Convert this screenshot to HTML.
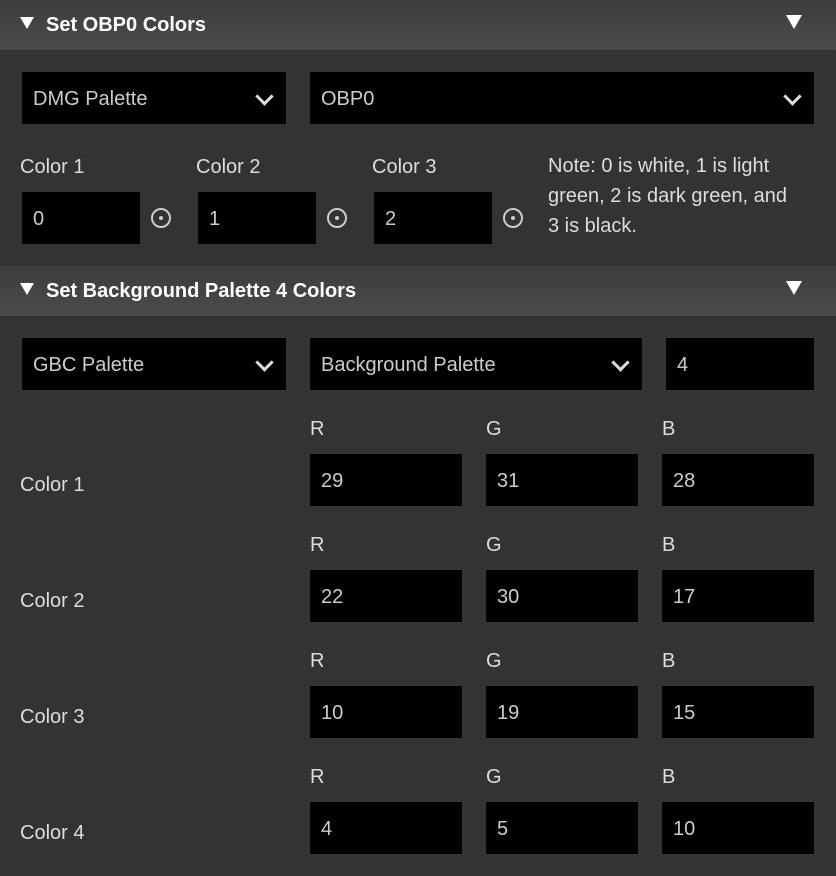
<!DOCTYPE html>
<html><head><meta charset="utf-8"><style>
*{margin:0;padding:0;box-sizing:border-box}
body{width:836px;height:876px;background:#333;font-family:"Liberation Sans",sans-serif;color:#ddd;position:relative;overflow:hidden;font-size:20px}
.hd{position:absolute;left:0;width:836px;height:50px;background:linear-gradient(#3c3c3c,#4b4b4b);color:#fff;font-weight:bold;font-size:20px}
.hd .t{position:absolute;left:20px;top:14px}
.hd .t:before{content:"";display:inline-block;width:0;height:0;border-left:7px solid transparent;border-right:7px solid transparent;border-top:12px solid #fff;margin-right:12px;vertical-align:2px}
.hd .a{position:absolute;right:34px;top:15px;width:0;height:0;border-left:8px solid transparent;border-right:8px solid transparent;border-top:14px solid #fff}
.b{position:absolute;background:#000;height:52px;color:#ccc;padding-left:11px;line-height:55px}
.dd:after{content:"";position:absolute;right:15px;top:18px;width:10px;height:10px;border-right:3px solid #ddd;border-bottom:3px solid #ddd;transform:rotate(45deg)}
.l{position:absolute;color:#ddd}
.ic{position:absolute;width:20px;height:20px;border:2px solid #ccc;border-radius:50%}
.ic:after{content:"";position:absolute;left:6px;top:6px;width:4px;height:4px;background:#ccc;border-radius:50%}
</style></head><body>
<div class="hd" style="top:0"><span class="t">Set OBP0 Colors</span><span class="a"></span></div>
<div class="b dd" style="left:22px;top:72px;width:264px">DMG Palette</div>
<div class="b dd" style="left:310px;top:72px;width:504px">OBP0</div>
<div class="l" style="left:20px;top:156px">Color 1</div>
<div class="l" style="left:196px;top:156px">Color 2</div>
<div class="l" style="left:372px;top:156px">Color 3</div>
<div class="b" style="left:22px;top:192px;width:118px">0</div>
<div class="b" style="left:198px;top:192px;width:118px">1</div>
<div class="b" style="left:374px;top:192px;width:118px">2</div>
<div class="ic" style="left:151px;top:208px"></div>
<div class="ic" style="left:327px;top:208px"></div>
<div class="ic" style="left:503px;top:208px"></div>
<div class="l" style="left:548px;top:151px;line-height:30px;width:280px">Note: 0 is white, 1 is light<br>green, 2 is dark green, and<br>3 is black.</div>
<div class="hd" style="top:266px"><span class="t">Set Background Palette 4 Colors</span><span class="a"></span></div>
<div class="b dd" style="left:22px;top:338px;width:264px">GBC Palette</div>
<div class="b dd" style="left:310px;top:338px;width:332px">Background Palette</div>
<div class="b" style="left:666px;top:338px;width:148px">4</div>

<div class="l" style="left:310px;top:418px">R</div><div class="l" style="left:486px;top:418px">G</div><div class="l" style="left:662px;top:418px">B</div>
<div class="l" style="left:20px;top:474px">Color 1</div>
<div class="b" style="left:310px;top:454px;width:152px">29</div><div class="b" style="left:486px;top:454px;width:152px">31</div><div class="b" style="left:662px;top:454px;width:152px">28</div>

<div class="l" style="left:310px;top:534px">R</div><div class="l" style="left:486px;top:534px">G</div><div class="l" style="left:662px;top:534px">B</div>
<div class="l" style="left:20px;top:590px">Color 2</div>
<div class="b" style="left:310px;top:570px;width:152px">22</div><div class="b" style="left:486px;top:570px;width:152px">30</div><div class="b" style="left:662px;top:570px;width:152px">17</div>

<div class="l" style="left:310px;top:650px">R</div><div class="l" style="left:486px;top:650px">G</div><div class="l" style="left:662px;top:650px">B</div>
<div class="l" style="left:20px;top:706px">Color 3</div>
<div class="b" style="left:310px;top:686px;width:152px">10</div><div class="b" style="left:486px;top:686px;width:152px">19</div><div class="b" style="left:662px;top:686px;width:152px">15</div>

<div class="l" style="left:310px;top:766px">R</div><div class="l" style="left:486px;top:766px">G</div><div class="l" style="left:662px;top:766px">B</div>
<div class="l" style="left:20px;top:822px">Color 4</div>
<div class="b" style="left:310px;top:802px;width:152px">4</div><div class="b" style="left:486px;top:802px;width:152px">5</div><div class="b" style="left:662px;top:802px;width:152px">10</div>
</body></html>
